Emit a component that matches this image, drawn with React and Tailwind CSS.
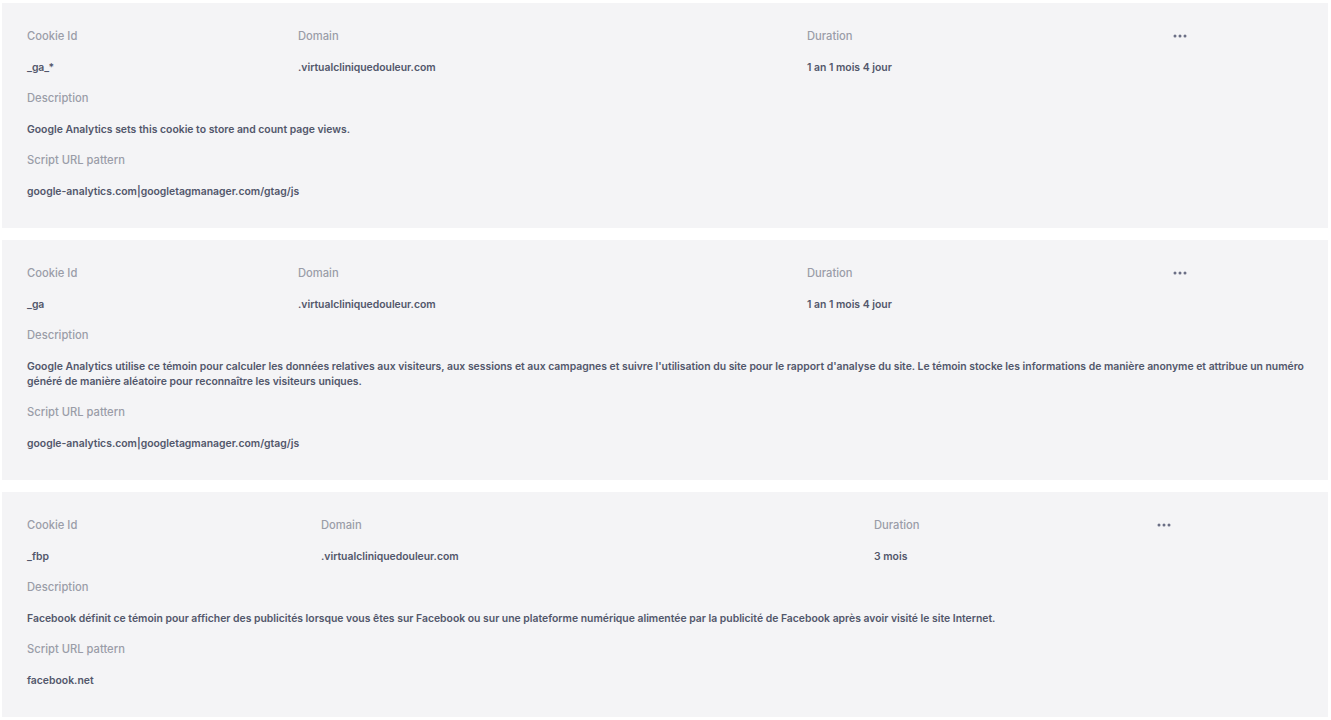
import React from "react";

const cookies = [
  {
    id: "_ga_*",
    domain: ".virtualcliniquedouleur.com",
    duration: "1 an 1 mois 4 jour",
    description: ["Google Analytics sets this cookie to store and count page views."],
    script: "google-analytics.com|googletagmanager.com/gtag/js",
    cols: ["w-[271px]", "w-[509px]", "w-[366px]"],
  },
  {
    id: "_ga",
    domain: ".virtualcliniquedouleur.com",
    duration: "1 an 1 mois 4 jour",
    description: [
      "Google Analytics utilise ce témoin pour calculer les données relatives aux visiteurs, aux sessions et aux campagnes et suivre l'utilisation du site pour le rapport d'analyse du site. Le témoin stocke les informations de manière anonyme et attribue un numéro",
      "généré de manière aléatoire pour reconnaître les visiteurs uniques.",
    ],
    script: "google-analytics.com|googletagmanager.com/gtag/js",
    cols: ["w-[271px]", "w-[509px]", "w-[366px]"],
  },
  {
    id: "_fbp",
    domain: ".virtualcliniquedouleur.com",
    duration: "3 mois",
    description: [
      "Facebook définit ce témoin pour afficher des publicités lorsque vous êtes sur Facebook ou sur une plateforme numérique alimentée par la publicité de Facebook après avoir visité le site Internet.",
    ],
    script: "facebook.net",
    cols: ["w-[294px]", "w-[553px]", "w-[283px]"],
  },
];

const Dots = () => (
  <svg width="14" height="4" viewBox="0 0 14 4" className="text-[#6b6f85]">
    <circle cx="2" cy="2" r="1.5" fill="currentColor" />
    <circle cx="7" cy="2" r="1.5" fill="currentColor" />
    <circle cx="12" cy="2" r="1.5" fill="currentColor" />
  </svg>
);

const Label = ({ children }) => (
  <div className="h-[31px] flex items-center text-[#9a9da8] text-[11.2px] font-medium">{children}</div>
);

const Value = ({ children }) => (
  <div className="min-h-[31px] flex items-center text-[#52576b] text-[10.4px] font-semibold">{children}</div>
);

const CookieCard = ({ cookie }) => (
  <div className="bg-[#f4f4f6] pl-[25px] pr-[25px] pt-[18px] pb-[21px]">
    <div className="flex">
      <div className={cookie.cols[0]}>
        <Label>Cookie Id</Label>
        <Value>{cookie.id}</Value>
      </div>
      <div className={cookie.cols[1]}>
        <Label>Domain</Label>
        <Value>{cookie.domain}</Value>
      </div>
      <div className={cookie.cols[2]}>
        <Label>Duration</Label>
        <Value>{cookie.duration}</Value>
      </div>
      <div className="h-[29px] flex items-center">
        <Dots />
      </div>
    </div>
    <Label>Description</Label>
    <div className="py-[8px] text-[#52576b] text-[10.4px] font-semibold leading-[15px]">
      {cookie.description.map((line, i) => (
        <div key={i} className="whitespace-nowrap">{line}</div>
      ))}
    </div>
    <Label>Script URL pattern</Label>
    <Value>{cookie.script}</Value>
  </div>
);

export default function App() {
  return (
    <div className="bg-white min-h-[720px] pt-[3px] pl-[2px] pr-[3px] flex flex-col gap-[12px]" style={{ fontFamily: "Inter, 'Noto Sans', sans-serif" }}>
      {cookies.map((c) => (
        <CookieCard key={c.id} cookie={c} />
      ))}
    </div>
  );
}
